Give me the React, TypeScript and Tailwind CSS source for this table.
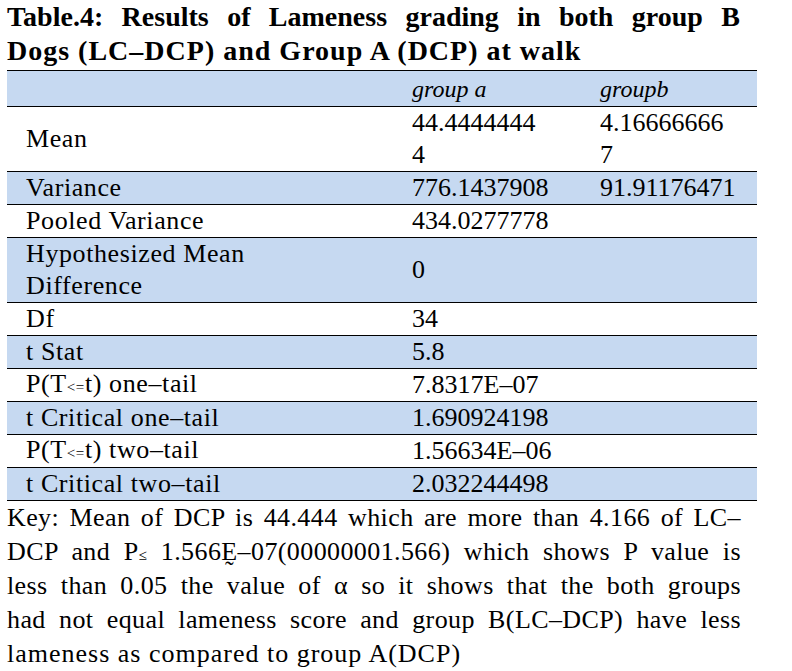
const ROWS: { label: React.ReactNode; a?: React.ReactNode; b?: React.ReactNode; tall?: boolean }[] = [
  { label: "Mean", a: <>44.4444444<br />4</>, b: <>4.16666666<br />7</>, tall: true },
  { label: "Variance", a: "776.1437908", b: "91.91176471" },
  { label: "Pooled Variance", a: "434.0277778" },
  { label: <>Hypothesized Mean<br />Difference</>, a: "0", tall: true },
  { label: "Df", a: "34" },
  { label: "t Stat", a: "5.8" },
  { label: <>P(T<span className="text-[15px]">&lt;=</span>t) one–tail</>, a: "7.8317E–07" },
  { label: "t Critical one–tail", a: "1.690924198" },
  { label: <>P(T<span className="text-[15px]">&lt;=</span>t) two–tail</>, a: "1.56634E–06" },
  { label: "t Critical two–tail", a: "2.032244498" },
];

const KEY_LINES = [
  "Key: Mean of DCP is 44.444 which are more than 4.166 of LC–",
  <>DCP and P<span className="text-[15px]">≤</span> 1.566Ḛ–07(00000001.566) which shows P value is</>,
  "less than 0.05 the value of α so it shows that the both groups",
  "had not equal lameness score and group B(LC–DCP) have less",
];

export default function App() {
  return (
    <div className="w-[792px] h-[671px] bg-white text-black font-['Liberation_Serif',serif] overflow-hidden">
      <div className="pl-[7px] w-[740px] text-[28px] leading-[34px] font-bold">
        <div className="[text-align-last:justify] text-justify">
          Table.4: Results of Lameness grading in both group B
        </div>
        <div className="tracking-[1px]">Dogs (LC–DCP) and Group A (DCP) at walk</div>
      </div>

      <div className="ml-[7px] w-[750px] mt-[2px] border-t border-black text-[26px] leading-[32px]">
        <div className="flex h-[36px] bg-[#c6d9f1] border-b border-black items-center italic text-[24px]">
          <div className="w-[395px]" />
          <div className="w-[188px] pl-[10px]">group a</div>
          <div className="flex-1 pl-[10px]">groupb</div>
        </div>
        {ROWS.map((r, i) => (
          <div
            key={i}
            className={`flex border-b border-black ${r.tall ? "h-[65px]" : "h-[33px]"} ${
              i % 2 === 1 ? "bg-[#c6d9f1]" : "bg-white"
            }`}
          >
            <div className="w-[395px] pl-[19px] flex items-center tracking-[0.6px]">
              <div>{r.label}</div>
            </div>
            <div className="w-[188px] pl-[10px] flex items-center">
              <div>{r.a}</div>
            </div>
            <div className="flex-1 pl-[10px]">{r.b}</div>
          </div>
        ))}
      </div>

      <div className="pl-[7px] w-[741px] text-[26px] leading-[34px]">
        {KEY_LINES.map((l, i) => (
          <div key={i} className="h-[34px] whitespace-nowrap text-justify [text-align-last:justify] tracking-[0.4px]">
            {l}
          </div>
        ))}
        <div className="h-[34px] tracking-[1px]">lameness as compared to group A(DCP)</div>
      </div>
    </div>
  );
}
